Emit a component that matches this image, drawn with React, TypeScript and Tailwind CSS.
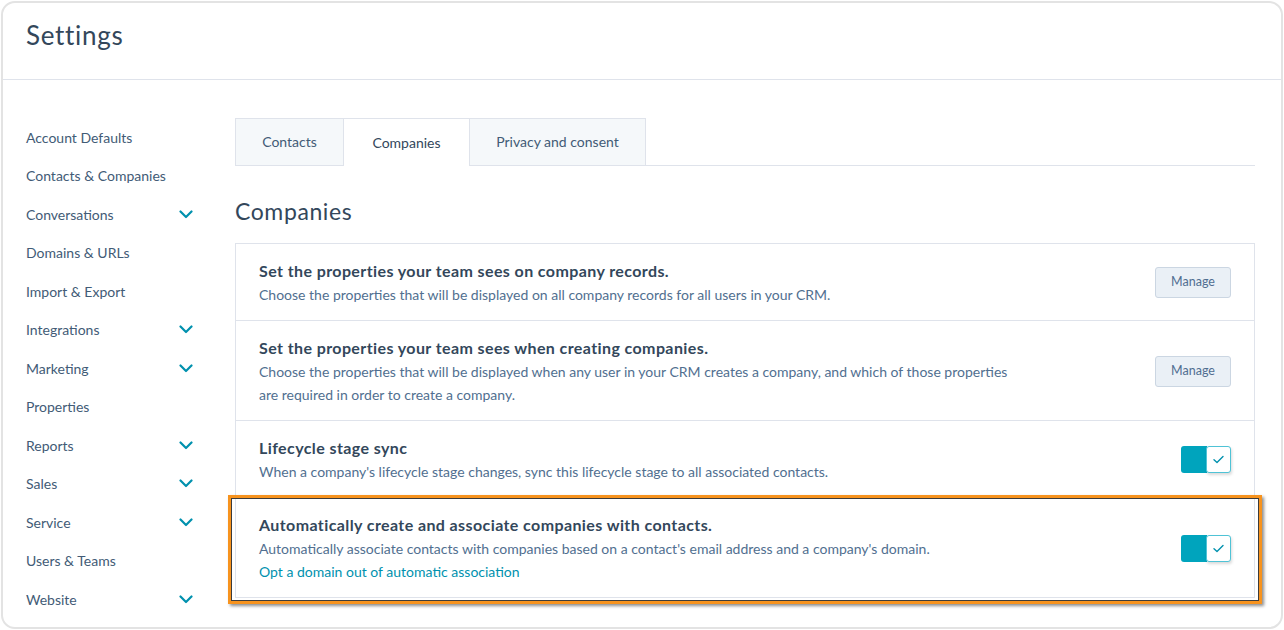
import React from 'react';

const navItems: { label: string; expandable?: boolean }[] = [
  { label: 'Account Defaults' },
  { label: 'Contacts & Companies' },
  { label: 'Conversations', expandable: true },
  { label: 'Domains & URLs' },
  { label: 'Import & Export' },
  { label: 'Integrations', expandable: true },
  { label: 'Marketing', expandable: true },
  { label: 'Properties' },
  { label: 'Reports', expandable: true },
  { label: 'Sales', expandable: true },
  { label: 'Service', expandable: true },
  { label: 'Users & Teams' },
  { label: 'Website', expandable: true },
];

function Chevron() {
  return (
    <svg width="14" height="9" viewBox="0 0 14 9" fill="none">
      <path d="M1.5 1.5L7 7L12.5 1.5" stroke="#0091ae" strokeWidth="2.2" strokeLinecap="round" strokeLinejoin="round" />
    </svg>
  );
}

function ManageButton() {
  return (
    <button className="h-[31px] w-[76px] rounded-[3px] border border-[#cbd6e2] bg-[#eaf0f6] text-[12.5px] text-[#506e91]">
      Manage
    </button>
  );
}

function Toggle() {
  return (
    <div className="flex h-[27px] w-[50px]">
      <div className="h-full w-[26px] rounded-l-[3px] bg-[#00a4bd]" />
      <div className="-ml-[1px] flex h-full w-[25px] items-center justify-center rounded-[3px] border border-[#4fc3d6] bg-white shadow-[1px_2px_3px_rgba(0,0,0,0.15)]">
        <svg width="11" height="9" viewBox="0 0 11 9" fill="none">
          <path d="M1 4.8L4 7.5L10 1.5" stroke="#0091ae" strokeWidth="1.4" strokeLinecap="round" strokeLinejoin="round" />
        </svg>
      </div>
    </div>
  );
}

function Row({
  title,
  children,
  action,
  border = true,
}: {
  title: string;
  children: React.ReactNode;
  action: React.ReactNode;
  border?: boolean;
}) {
  return (
    <div className={`flex items-center justify-between px-[23px] pt-[15px] pb-[14px] ${border ? 'border-b border-[#dfe3eb]' : ''}`}>
      <div className="max-w-[760px]">
        <div className="text-[16px] font-bold leading-[24px] tracking-[0.4px] text-[#33475b]">{title}</div>
        <div className="text-[14px] leading-[23px] text-[#516f90]">{children}</div>
      </div>
      {action}
    </div>
  );
}

export default function App() {
  return (
    <div className="h-[630px] w-[1284px] bg-white p-[1px] font-['Lato',sans-serif]">
      <div className="h-full w-[1282px] overflow-hidden rounded-[14px] border-2 border-[#e3e3e3] bg-white">
        {/* Header */}
        <div className="flex h-[77px] items-center border-b border-[#dfe3eb] pl-[23px]">
          <h1 className="-mt-[11px] text-[26px] font-normal tracking-[0.7px] text-[#33475b]">Settings</h1>
        </div>

        <div className="flex">
          {/* Sidebar */}
          <nav className="w-[232px] shrink-0 pl-[23px] pt-[38px]">
            {navItems.map((item) => (
              <div key={item.label} className="flex h-[38.5px] w-[167px] items-center justify-between text-[14px] text-[#425b76]">
                <span>{item.label}</span>
                {item.expandable && <Chevron />}
              </div>
            ))}
          </nav>

          {/* Main content */}
          <main className="w-[1020px] pt-[38px]">
            <div className="flex border-b border-[#dfe3eb]">
              <div className="-mb-[1px] flex h-[48px] w-[109px] items-center justify-center border border-[#dfe3eb] bg-[#f5f8fa] pb-[1px] text-[14px] text-[#425b76]">
                Contacts
              </div>
              <div className="-mb-[1px] flex h-[48px] w-[125px] items-center justify-center border-t border-[#dfe3eb] bg-white pb-[1px] text-[14px] text-[#33475b]">
                Companies
              </div>
              <div className="-mb-[1px] flex h-[48px] w-[177px] items-center justify-center border border-[#dfe3eb] bg-[#f5f8fa] pb-[1px] text-[14px] text-[#425b76]">
                Privacy and consent
              </div>
            </div>

            <h2 className="mt-[30px] text-[23px] font-normal leading-[30px] tracking-[0.6px] text-[#33475b]">Companies</h2>

            <div className="mt-[17px] border border-[#dfe3eb]">
              <Row title="Set the properties your team sees on company records." action={<ManageButton />}>
                Choose the properties that will be displayed on all company records for all users in your CRM.
              </Row>
              <Row title="Set the properties your team sees when creating companies." action={<ManageButton />}>
                Choose the properties that will be displayed when any user in your CRM creates a company, and which of those properties are required in order to create a company.
              </Row>
              <Row title="Lifecycle stage sync" action={<Toggle />}>
                When a company's lifecycle stage changes, sync this lifecycle stage to all associated contacts.
              </Row>
              <div className="relative">
                <Row title="Automatically create and associate companies with contacts." action={<Toggle />} border={false}>
                  Automatically associate contacts with companies based on a contact's email address and a company's domain.
                  <div className="text-[14px] text-[#0091ae]">Opt a domain out of automatic association</div>
                </Row>
                <div className="pointer-events-none absolute -top-[3px] -bottom-[7px] -left-[8px] -right-[8px] border-[3px] border-[#f7931e] shadow-[inset_1px_1px_0_#3c3c3c,inset_-1px_-1px_0_#3c3c3c,2px_2px_3px_rgba(0,0,0,0.45)]" />
              </div>
            </div>
          </main>
        </div>
      </div>
    </div>
  );
}
